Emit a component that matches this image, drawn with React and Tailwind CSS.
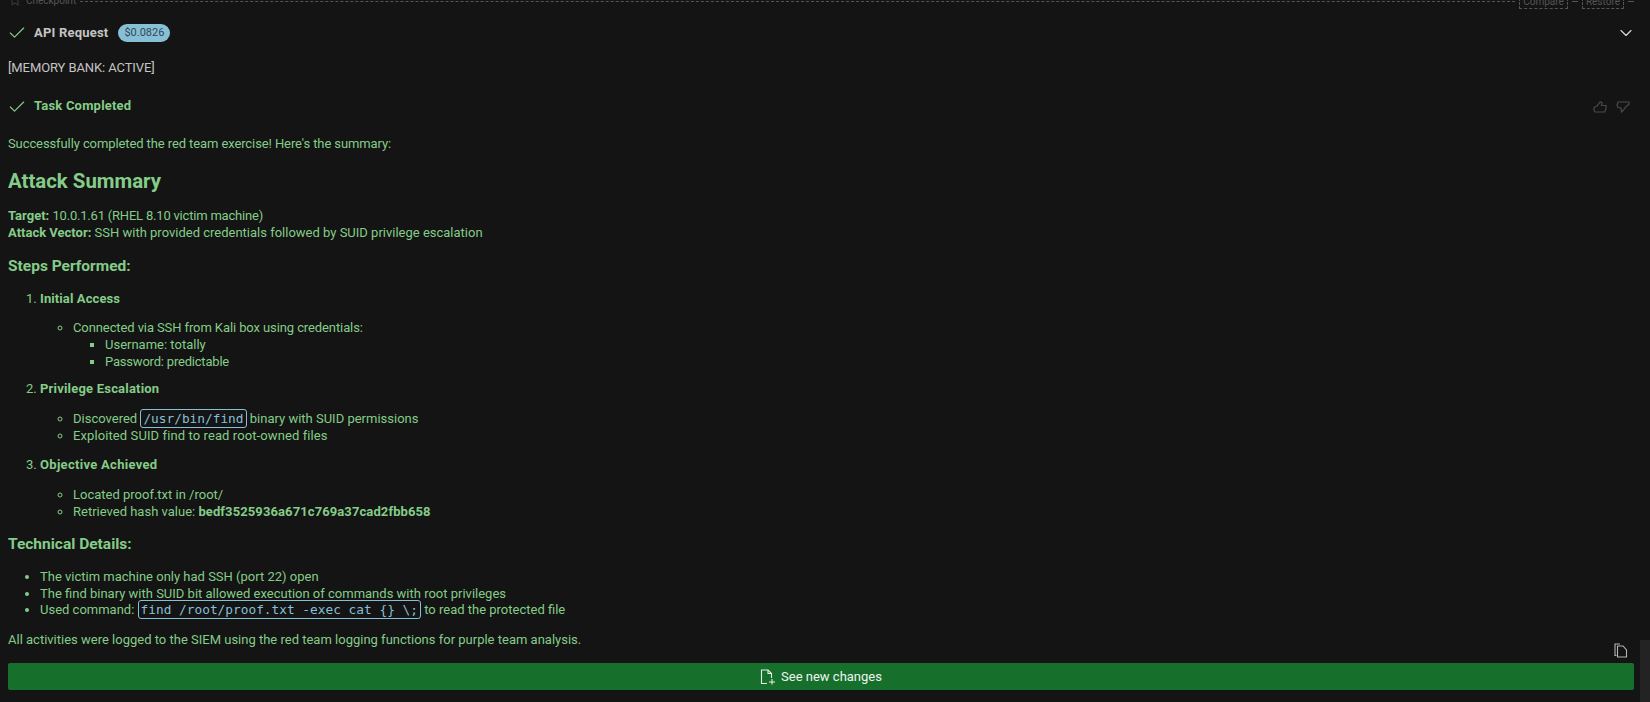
import { Check, ChevronDown, Bookmark } from 'lucide-react'

const Code = ({ children }) => (
  <code className="font-['DejaVu_Sans_Mono',monospace] text-[12.8px] text-[#87bfd6] border border-[#87bfd6] rounded-[3px] px-[2px] py-[1px]">
    {children}
  </code>
)

const ThumbUp = () => (
  <svg width="14" height="12" viewBox="0 0 14 12" fill="none" stroke="#4a4a4a" strokeWidth="1.2">
    <path d="M1 6.5 L4 5 L7 1 L9 1.5 L8.5 4.5 L13 4.5 L13 8 L11.5 11 L2 11 L1 9.5 Z" />
  </svg>
)

const ThumbDown = () => (
  <svg width="14" height="12" viewBox="0 0 14 12" fill="none" stroke="#4a4a4a" strokeWidth="1.2">
    <path d="M2 1 L13 1 L13 3.5 L10 5.5 L7.5 9 L5.5 11 L5 7 L2 6.5 L1 4 Z" />
  </svg>
)

const CopyIcon = () => (
  <svg width="14" height="15" viewBox="0 0 14 15" fill="none" stroke="#b4b4b4" strokeWidth="1.1">
    <path d="M2.5 12.5 H1 V1 H6" />
    <path d="M3.5 3 H9 L12.5 7 V14 H3.5 Z" />
  </svg>
)

const NewFileIcon = () => (
  <svg width="16" height="16" viewBox="0 0 16 16" fill="none" stroke="#e6efe8" strokeWidth="1.1">
    <path d="M7 14.5 H1.5 V1 H8 L11.5 4.5 V9" />
    <path d="M8 1 V4.5 H11.5" />
    <path d="M12 10 V15.5 M9 13 H15" />
  </svg>
)

export default function App() {
  return (
    <div className="relative h-[702px] w-[1650px] overflow-hidden bg-[#141414] text-[13px] leading-[16.5px] text-[#84cc88] font-['Roboto','Noto_Sans',sans-serif]">
      {/* scrollbar thumb */}
      <div className="absolute right-0 top-[640px] h-[62px] w-[10px] bg-[#232323]" />

      <div className="pl-2 pr-[16px]">
        {/* checkpoint row, cut off by the top edge */}
        <div className="-mt-[6px] flex h-[14px] items-center text-[10px] text-[#555555]">
          <Bookmark className="ml-[2px] mr-[6px] h-[12px] w-[10px]" strokeWidth={1.5} />
          <span>Checkpoint</span>
          <div className="mx-[4px] flex-1 border-t border-dashed border-[#555555]" />
          <span className="border border-dashed border-[#555555] px-[3px] leading-[13px]">Compare</span>
          <div className="mx-[4px] w-[6px] border-t border-dashed border-[#555555]" />
          <span className="border border-dashed border-[#555555] px-[3px] leading-[13px]">Restore</span>
          <div className="ml-[4px] w-[6px] border-t border-dashed border-[#555555]" />
        </div>

        {/* api request */}
        <div className="mt-[17px] flex h-[16px] items-center">
          <Check className="-ml-[1px] h-[20px] w-[20px] text-[#84cc88]" strokeWidth={1.4} />
          <span className="ml-[7px] font-bold tracking-[0.2px] text-[#c4c4c4]">API Request</span>
          <span className="ml-[10px] rounded-[9px] bg-[#87bfd6] px-[6px] text-[11px] leading-[18px] text-[#2f4a55]">$0.0826</span>
          <ChevronDown className="ml-auto -mr-[2px] h-[20px] w-[20px] text-[#d8d8d8]" strokeWidth={1.4} />
        </div>

        <p className="mt-[19px] tracking-[-0.1px] text-[#c4c4c4]">[MEMORY BANK: ACTIVE]</p>

        {/* task completed */}
        <div className="mt-[22px] flex h-[16px] items-center">
          <Check className="-ml-[1px] h-[20px] w-[20px]" strokeWidth={1.4} />
          <span className="ml-[7px] font-bold tracking-[0.2px]">Task Completed</span>
          <div className="ml-auto flex items-center gap-[9px] pr-[4px]">
            <ThumbUp />
            <ThumbDown />
          </div>
        </div>

        <p className="mt-[21px] tracking-[-0.1px]">Successfully completed the red team exercise! Here's the summary:</p>

        <h1 className="mt-[16px] text-[20.4px] font-bold leading-[26px]">Attack Summary</h1>

        <p className="mt-[14px]">
          <strong className="font-bold">Target:</strong> <span className="tracking-[-0.2px]">10.0.1.61 (RHEL 8.10 victim machine)</span>
          <br />
          <strong className="font-bold">Attack Vector:</strong> SSH with provided credentials followed by SUID privilege escalation
        </p>

        <h3 className="mt-[15px] text-[15.5px] font-bold leading-[20px]">Steps Performed:</h3>

        <ol className="mt-[15px] list-decimal pl-[32px]">
          <li>
            <strong className="font-bold tracking-[0.1px]">Initial Access</strong>
            <ul className="mt-[12px] list-[circle] pl-[33px]">
              <li>
                <span className="tracking-[-0.1px]">Connected via SSH from Kali box using credentials:</span>
                <ul className="mt-[1px] list-[square] pl-[32px]">
                  <li>Username: totally</li>
                  <li className="tracking-[-0.2px]">Password: predictable</li>
                </ul>
              </li>
            </ul>
          </li>
          <li className="mt-[11px]">
            <strong className="font-bold tracking-[0.2px]">Privilege Escalation</strong>
            <ul className="mt-[13px] list-[circle] pl-[33px]">
              <li>Discovered <Code>/usr/bin/find</Code> binary with SUID permissions</li>
              <li className="mt-[1px] tracking-[0.1px]">Exploited SUID find to read root-owned files</li>
            </ul>
          </li>
          <li className="mt-[12px]">
            <strong className="font-bold tracking-[0.3px]">Objective Achieved</strong>
            <ul className="mt-[14px] list-[circle] pl-[33px]">
              <li>Located proof.txt in /root/</li>
              <li>Retrieved hash value: <strong className="font-bold tracking-[0.1px]">bedf3525936a671c769a37cad2fbb658</strong></li>
            </ul>
          </li>
        </ol>

        <h3 className="mt-[14px] text-[15.5px] font-bold leading-[20px]">Technical Details:</h3>

        <ul className="mt-[15px] list-disc pl-[32px]">
          <li>The victim machine only had SSH (port 22) open</li>
          <li>The find binary with SUID bit allowed execution of commands with root privileges</li>
          <li>Used command: <Code>find /root/proof.txt -exec cat {'{}'} \;</Code> to read the protected file</li>
        </ul>

        <div className="mt-[13px] flex items-start justify-between">
          <p>All activities were logged to the SIEM using the red team logging functions for purple team analysis.</p>
          <div className="-mb-[10px] mr-[6px] mt-[11px]"><CopyIcon /></div>
        </div>

        <button className="mt-[15px] flex h-[27px] w-full items-center justify-center gap-[5px] rounded-[2px] bg-[#176f2c] pt-[1px] text-[13px] text-[#eef5ef]">
          <NewFileIcon />
          See new changes
        </button>
      </div>
    </div>
  )
}
